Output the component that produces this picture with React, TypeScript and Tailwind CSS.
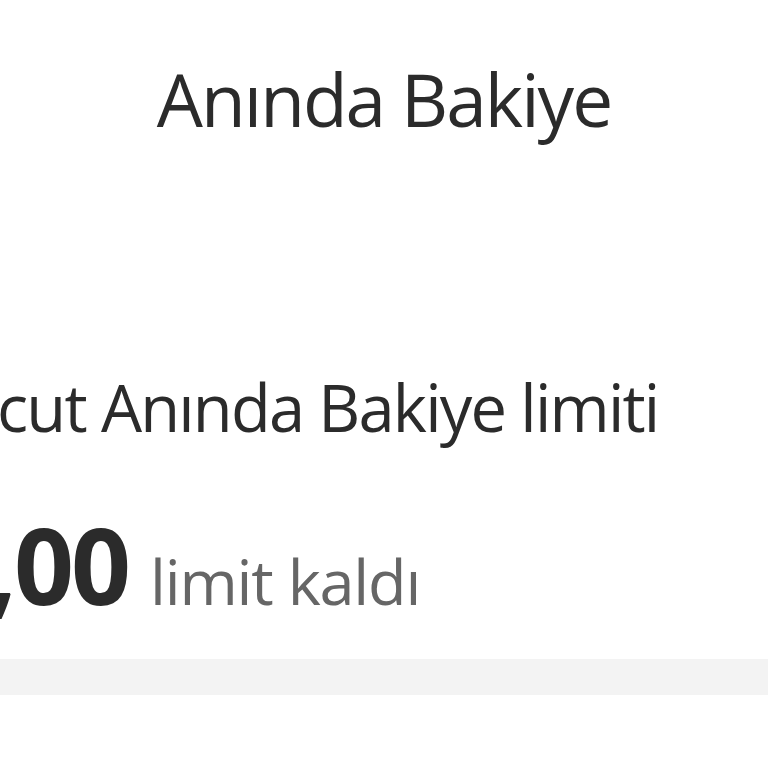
export default function App() {
  return (
    <div className="w-[768px] h-[768px] overflow-hidden bg-white font-['Open_Sans',sans-serif]">
      {/* header */}
      <div className="h-[300px] pt-[62px] flex justify-center">
        <h1 className="text-[73px] leading-none text-[#2b2b2b] whitespace-nowrap tracking-[-2px]">Anında Bakiye</h1>
      </div>

      {/* limit card */}
      <div className="pt-[75px] flex flex-col">
        <p className="-ml-[125px] text-[65px] leading-none text-[#2b2b2b] whitespace-nowrap tracking-[-1.8px]">
          Mevcut Anında Bakiye limiti
        </p>
        <div className="mt-[72px] flex items-baseline whitespace-nowrap">
          <div className="w-[128px] flex justify-end">
            <span className="text-[105px] leading-none font-bold text-[#2b2b2b] tracking-[-3px]">25,00</span>
          </div>
          <span className="ml-[22px] text-[63px] leading-none text-[#666666] tracking-[-1.2px]">limit kaldı</span>
        </div>
      </div>

      <div className="mt-[42px] h-[36px] bg-[#f3f3f3]" />
    </div>
  );
}
